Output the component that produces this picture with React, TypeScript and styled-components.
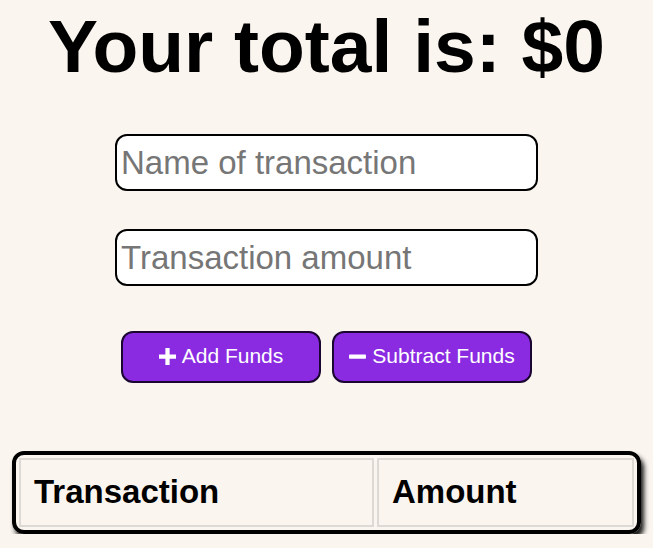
import React from "react";
import styled, { createGlobalStyle } from "styled-components";

const Global = createGlobalStyle`
  html, body { margin: 0; padding: 0; background: #faf5ef; }
  body { font-family: "Liberation Sans", Arial, sans-serif; }
`;

const Page = styled.div`
  display: flex;
  flex-direction: column;
  align-items: center;
  padding: 4px 12px 0;
`;

const Title = styled.h1`
  margin: 0;
  font-size: 75px;
  font-weight: 700;
  line-height: 84px;
  color: #000;
`;

const Form = styled.div`
  display: flex;
  flex-direction: column;
  align-items: center;
  gap: 38px;
  margin-top: 46px;
`;

const Field = styled.input`
  box-sizing: border-box;
  width: 423px;
  height: 57px;
  border: 2px solid #000;
  border-radius: 12px;
  background: #fff;
  padding: 0 4px;
  font-family: "Liberation Sans", Arial, sans-serif;
  font-size: 33px;
  color: #000;
  outline: none;
  &::placeholder { color: #767676; }
`;

const Buttons = styled.div`
  display: flex;
  gap: 11px;
  margin-top: 45px;
`;

const Button = styled.button`
  box-sizing: border-box;
  width: 200px;
  height: 52px;
  display: flex;
  align-items: center;
  justify-content: center;
  gap: 6px;
  background: #8a2be2;
  border: 2px solid #1a0630;
  border-radius: 12px;
  color: #fff;
  font-family: "Liberation Sans", Arial, sans-serif;
  font-size: 21px;
  cursor: pointer;
  padding: 0 0 2px;
`;

const Icon = styled.svg`
  width: 17px;
  height: 17px;
  fill: #fff;
  flex: none;
`;

const Table = styled.table`
  box-sizing: border-box;
  width: 629px;
  margin-top: 68px;
  border: 4px solid #000;
  border-radius: 12px;
  box-shadow: 3px 5px 5px rgba(0, 0, 0, 0.9);
  border-collapse: separate;
  border-spacing: 3px;
`;

const Head = styled.th<{ $w: string }>`
  width: ${(p) => p.$w};
  text-align: left;
  border: 2px solid #ddd9d4;
  padding: 13px 13px 14px;
  font-size: 33px;
  font-weight: 700;
  color: #000;
`;

export default function App() {
  return (
    <>
      <Global />
      <Page>
        <Title>Your total is: $0</Title>
        <Form>
          <Field placeholder="Name of transaction" />
          <Field placeholder="Transaction amount" />
        </Form>
        <Buttons>
          <Button>
            <Icon viewBox="0 0 16 16">
              <path d="M6 0h4v6h6v4h-6v6H6v-6H0V6h6z" />
            </Icon>
            Add Funds
          </Button>
          <Button>
            <Icon viewBox="0 0 16 16">
              <rect x="0" y="6" width="16" height="4" rx="0.8" />
            </Icon>
            Subtract Funds
          </Button>
        </Buttons>
        <Table>
          <thead>
            <tr>
              <Head $w="58%">Transaction</Head>
              <Head $w="42%">Amount</Head>
            </tr>
          </thead>
        </Table>
      </Page>
    </>
  );
}
